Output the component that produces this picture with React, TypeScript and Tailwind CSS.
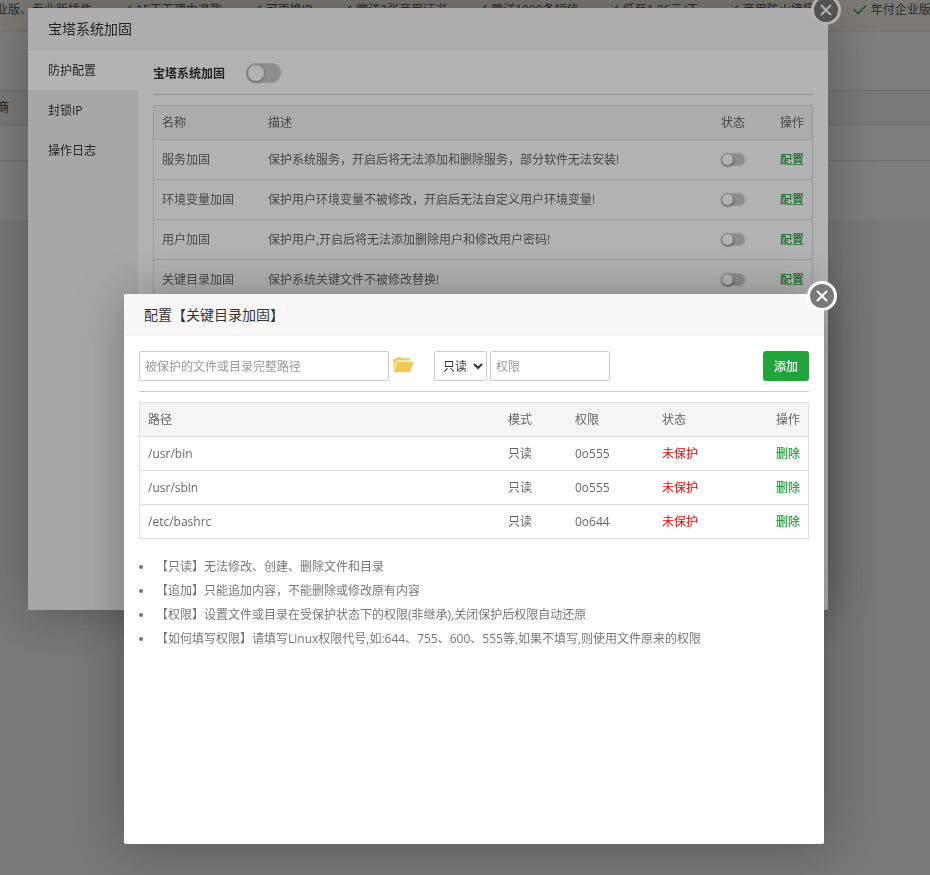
import React, { useState } from 'react';

const features = [
  '企业版、专业版插件',
  '15天无理由退款',
  '可更换IP',
  '赠送2张商用证书',
  '赠送1000条短信',
  '低至1.86元/天',
  '商用防火墙授权',
  '年付企业版运维服务',
];

const menus = ['防护配置', '封锁IP', '操作日志'];

const rules = [
  { name: '服务加固', desc: '保护系统服务，开启后将无法添加和删除服务，部分软件无法安装!' },
  { name: '环境变量加固', desc: '保护用户环境变量不被修改，开启后无法自定义用户环境变量!' },
  { name: '用户加固', desc: '保护用户,开启后将无法添加删除用户和修改用户密码!' },
  { name: '关键目录加固', desc: '保护系统关键文件不被修改替换!' },
];

const paths = [
  { path: '/usr/bin', mode: '只读', perm: '0o555' },
  { path: '/usr/sbin', mode: '只读', perm: '0o555' },
  { path: '/etc/bashrc', mode: '只读', perm: '0o644' },
];

const tips = [
  '【只读】无法修改、创建、删除文件和目录',
  '【追加】只能追加内容，不能删除或修改原有内容',
  '【权限】设置文件或目录在受保护状态下的权限(非继承),关闭保护后权限自动还原',
  '【如何填写权限】请填写Linux权限代号,如:644、755、600、555等,如果不填写,则使用文件原来的权限',
];

function CheckMark() {
  return (
    <svg width="14" height="12" viewBox="0 0 14 12" fill="none" stroke="#20a53a" strokeWidth="1.4" className="shrink-0">
      <path d="M1 5.5 5 9.5 13 1.5" />
    </svg>
  );
}

function FolderIcon() {
  return (
    <svg width="21" height="16" viewBox="0 0 21 16" fill="#efca5b">
      <path d="M0.5 14V2.2Q0.5 1.2 1.5 1.2H3.8L4.6 0.2H8.8L9.8 1.2H16Q17 1.2 17 2.2V3.4H4.8Q3.8 3.4 3.3 4.4Z" />
      <path d="M4.9 4.8H20.2Q21 4.8 20.7 5.6L17.4 14.4Q17 15.2 16.2 15.2H0.8L4.1 5.4Q4.3 4.8 4.9 4.8Z" />
    </svg>
  );
}

function CloseButton() {
  return (
    <button
      type="button"
      aria-label="关闭"
      className="absolute -right-[13px] -top-[13px] flex h-[30px] w-[30px] items-center justify-center rounded-full border-[3px] border-white bg-[#787878]"
    >
      <svg width="12" height="12" viewBox="0 0 12 12" stroke="#fff" strokeWidth="2" strokeLinecap="round">
        <path d="M1.5 1.5 10.5 10.5M10.5 1.5 1.5 10.5" />
      </svg>
    </button>
  );
}

function SmallSwitch({ label }: { label: string }) {
  return (
    <input
      type="checkbox"
      role="switch"
      aria-label={label}
      className="relative block h-[13px] w-6 appearance-none rounded-full bg-[#cbcbcb] shadow-[inset_0_0_0_1px_#d4d4d4] before:absolute before:left-px before:top-px before:h-[11px] before:w-[11px] before:rounded-full before:bg-white before:shadow-[0_1px_2px_1px_rgba(0,0,0,0.3)] checked:bg-[#20a53a] checked:before:left-3"
    />
  );
}

function Backdrop() {
  const th = 'h-[35px] border-y border-[#ddd] bg-[#f6f6f6] px-2 text-left font-medium text-[#555]';
  return (
    <div className="overflow-hidden">
      <div className="h-8 border-b border-[#f0e8d0] bg-[#fdf9ec]">
        <div className="-ml-[34px] flex gap-[26px] whitespace-nowrap text-[#555]">
          {features.map(f => (
            <span key={f} className="flex items-center gap-1 leading-5">
              <CheckMark />
              {f}
            </span>
          ))}
        </div>
      </div>
      <div className="bg-white pb-[59px] pt-[58px]">
        <div className="-ml-[35px]">
          <table className="w-full border-separate border-spacing-0">
            <thead>
              <tr>
                <th className={th}>开发商</th>
              </tr>
            </thead>
            <tbody>
              <tr>
                <td className="h-9 border-b border-[#ddd]" />
              </tr>
            </tbody>
          </table>
        </div>
      </div>
    </div>
  );
}

function HardeningDialog() {
  const [active, setActive] = useState(0);
  const th = 'h-[34px] border-b border-[#ddd] bg-[#f6f6f6] px-2 font-normal';
  const td = 'h-10 border-b border-[#ddd] px-2';

  return (
    <div className="fixed inset-0 z-10 bg-black/30 pl-7 pt-2">
      <section className="relative flex min-h-[602px] w-[800px] flex-col rounded-[2px] bg-white shadow-[1px_1px_50px_rgba(0,0,0,0.3)]">
        <h2 className="h-[42px] rounded-t-[2px] border-b border-[#eee] bg-[#f8f8f8] px-5 text-sm leading-[42px] text-[#333]">
          宝塔系统加固
        </h2>
        <CloseButton />
        <div className="flex flex-1">
          <nav className="flex w-[110px] shrink-0 flex-col bg-[#f0f0f0]">
            {menus.map((m, i) => (
              <button
                key={m}
                type="button"
                onClick={() => setActive(i)}
                className={`h-10 px-5 pt-0.5 text-left text-[#333] ${i === active ? 'bg-white' : ''}`}
              >
                {m}
              </button>
            ))}
          </nav>
          <div className="flex-1 px-[15px] pt-[13px]">
            <div className="flex items-center border-b border-[#ccc] pb-[11px]">
              <label htmlFor="hardening" className="w-[93px] pt-0.5 font-bold text-[#333]">宝塔系统加固</label>
              <input
                id="hardening"
                type="checkbox"
                role="switch"
                className="relative h-5 w-[35px] appearance-none rounded-full bg-[#cbcbcb] shadow-[inset_0_0_0_1px_#d4d4d4] before:absolute before:left-0.5 before:top-0.5 before:h-4 before:w-4 before:rounded-full before:bg-white before:shadow-[0_1px_2px_1px_rgba(0,0,0,0.2)] checked:bg-[#20a53a] checked:before:left-4"
              />
            </div>
            <table className="mt-[10px] w-full table-fixed border-separate border-spacing-0 border border-b-0 border-[#ddd] text-left text-[#666]">
              <thead>
                <tr>
                  <th className={`${th} w-[106px]`}>名称</th>
                  <th className={th}>描述</th>
                  <th className={`${th} w-[51px]`}>状态</th>
                  <th className={`${th} w-12 text-right`}>操作</th>
                </tr>
              </thead>
              <tbody>
                {rules.map(rule => (
                  <tr key={rule.name}>
                    <td className={td}>{rule.name}</td>
                    <td className={td}>{rule.desc}</td>
                    <td className={td}><SmallSwitch label={rule.name} /></td>
                    <td className={`${td} text-right`}>
                      <a href="#config" className="font-medium text-[#20a53a]">配置</a>
                    </td>
                  </tr>
                ))}
              </tbody>
            </table>
          </div>
        </div>
      </section>
    </div>
  );
}

function ConfigDialog() {
  const th = 'h-[34px] border-b border-[#ddd] bg-[#f6f6f6] px-2 font-normal';
  const td = 'h-[34px] border-b border-[#ddd] px-2';
  const field = 'h-[30px] rounded-[2px] border border-[#ccc] bg-white px-[5px] text-[#555] placeholder:text-[#999]';

  return (
    <div className="fixed inset-0 z-20 bg-black/30 pl-[124px] pt-[294px]">
      <section className="relative min-h-[550px] w-[700px] rounded-[2px] bg-white shadow-[1px_1px_50px_rgba(0,0,0,0.3)]">
        <h2 className="h-[42px] rounded-t-[2px] border-b border-[#eee] bg-[#f8f8f8] px-5 text-sm leading-[42px] text-[#333]">
          配置【关键目录加固】
        </h2>
        <CloseButton />
        <div className="p-[15px]">
          <form className="flex items-center border-b border-[#ccc] pb-[10px]" onSubmit={e => e.preventDefault()}>
            <input aria-label="路径" placeholder="被保护的文件或目录完整路径" className={`${field} w-[250px]`} />
            <button type="button" aria-label="选择目录" className="ml-1 mr-5 pb-0.5">
              <FolderIcon />
            </button>
            <select aria-label="模式" className="h-[30px] w-[53px] rounded-[2px] border border-[#ccc] bg-white px-1 text-[#333]">
              <option>只读</option>
              <option>追加</option>
            </select>
            <input aria-label="权限" placeholder="权限" className={`${field} ml-[3px] w-[120px]`} />
            <button type="submit" className="ml-auto h-[30px] w-[46px] rounded-[3px] bg-[#20a53a] pt-0.5 font-medium text-white">
              添加
            </button>
          </form>

          <table className="mt-[10px] w-full table-fixed border-separate border-spacing-0 border border-b-0 border-[#ddd] text-left text-[#666]">
            <thead>
              <tr>
                <th className={th}>路径</th>
                <th className={`${th} w-[67px]`}>模式</th>
                <th className={`${th} w-[87px]`}>权限</th>
                <th className={`${th} w-[106px]`}>状态</th>
                <th className={`${th} w-12 text-right`}>操作</th>
              </tr>
            </thead>
            <tbody>
              {paths.map(p => (
                <tr key={p.path}>
                  <td className={td}>{p.path}</td>
                  <td className={td}>{p.mode}</td>
                  <td className={td}>{p.perm}</td>
                  <td className={`${td} text-[#f00]`}>未保护</td>
                  <td className={`${td} text-right`}>
                    <a href="#delete" className="font-medium text-[#20a53a]">删除</a>
                  </td>
                </tr>
              ))}
            </tbody>
          </table>

          <ul className="mt-4 leading-6 text-[#777]">
            {tips.map(tip => (
              <li
                key={tip}
                className="flex items-center before:mr-[13px] before:h-1 before:w-1 before:shrink-0 before:rounded-full before:bg-[#777]"
              >
                {tip}
              </li>
            ))}
          </ul>
        </div>
      </section>
    </div>
  );
}

export default function App() {
  return (
    <div className="min-h-screen bg-[#f4f4f4] font-['Open_Sans','Noto_Sans_CJK_SC',sans-serif] text-[12px] leading-[18px]">
      <Backdrop />
      <HardeningDialog />
      <ConfigDialog />
    </div>
  );
}
